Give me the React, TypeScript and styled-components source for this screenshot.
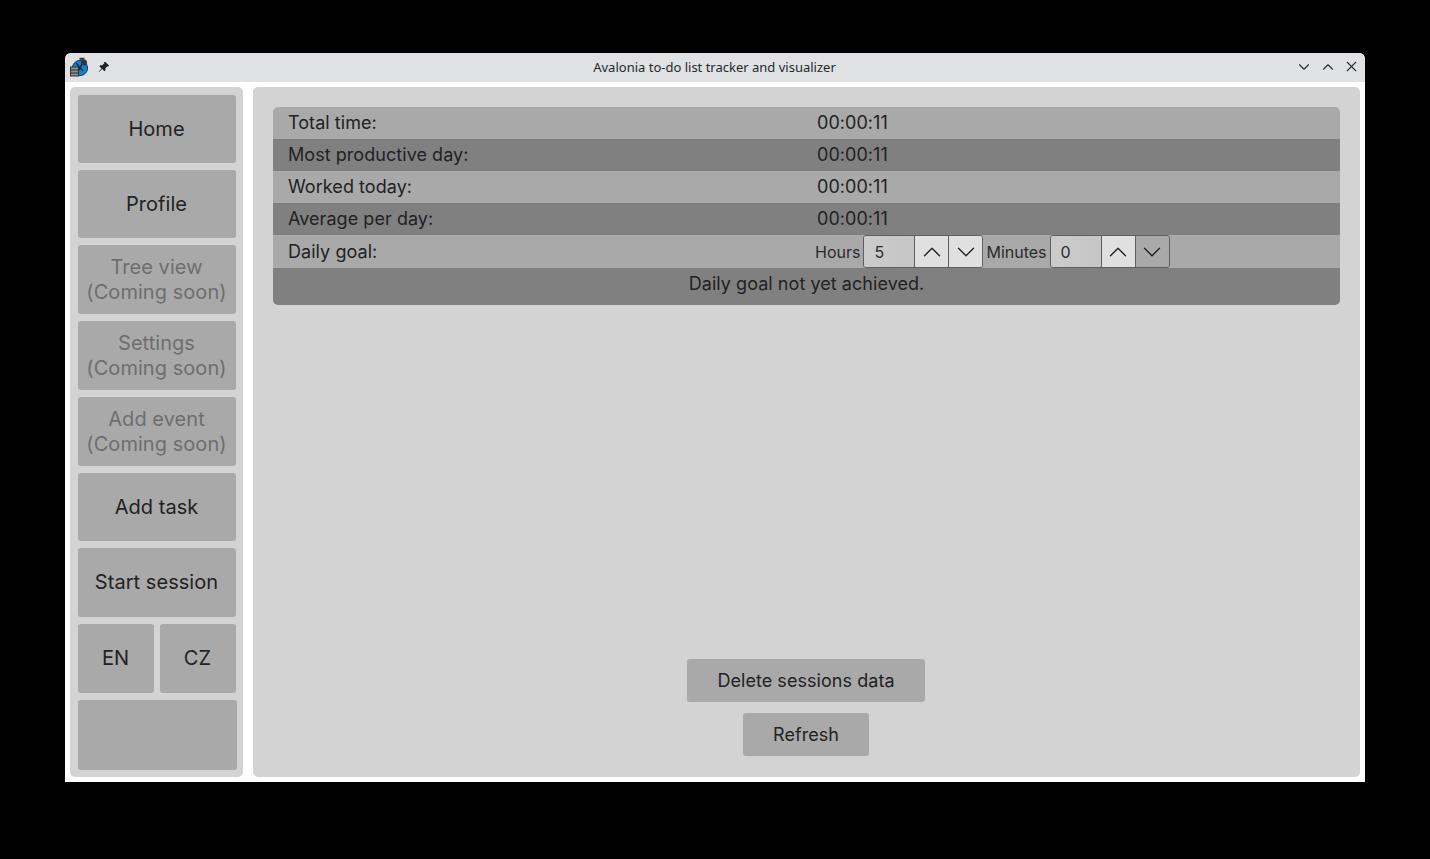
import styled, { createGlobalStyle } from 'styled-components';
import { ChevronDown, ChevronUp, X } from 'lucide-react';

const rows = [
  { label: 'Total time:', value: '00:00:11' },
  { label: 'Most productive day:', value: '00:00:11' },
  { label: 'Worked today:', value: '00:00:11' },
  { label: 'Average per day:', value: '00:00:11' },
];

function AppIcon() {
  return (
    <svg width="20" height="20" viewBox="0 0 20 20">
      <circle cx="11" cy="11" r="7.6" fill="#1583c9" stroke="#143a58" strokeWidth="1" />
      <path d="M7 6l7 8M13 7l-3 6" stroke="#0d2a44" strokeWidth="1.4" fill="none" />
      <rect x="10.5" y="0.8" width="5" height="2" fill="#2d3238" />
      <circle cx="15" cy="5.5" r="3" fill="#30363c" />
      <rect x="1.5" y="10" width="8" height="9" fill="#8d9189" stroke="#2c3238" strokeWidth="1" />
      <path d="M2 13h7M2 16h7" stroke="#2c3238" strokeWidth="1" />
    </svg>
  );
}

function PinIcon() {
  return (
    <svg width="12" height="12" viewBox="0 0 12 12">
      <path d="M7.2 0.8l4 4-1 .8-.8-.3-2 2 .1 2-1 1-2.3-2.3L1 11l-.3-.3 2.9-3.2L1.3 5.2l1-1 2 .1 2-2-.3-.8z" fill="#1f2225" />
    </svg>
  );
}

function Spinner({ label, value, hovered }: { label: string; value: string; hovered?: boolean }) {
  return (
    <SpinnerGroup>
      <SpinnerLabel>{label}</SpinnerLabel>
      <SpinnerBox>
        <SpinnerValue>{value}</SpinnerValue>
        <SpinnerButton>
          <ChevronUp size={30} strokeWidth={1.1} />
        </SpinnerButton>
        <SpinnerButton $hovered={hovered}>
          <ChevronDown size={30} strokeWidth={1.1} />
        </SpinnerButton>
      </SpinnerBox>
    </SpinnerGroup>
  );
}

function App() {
  return (
    <>
      <GlobalStyle />
      <Window>
        <TitleBar>
          <TitleLeft>
            <AppIcon />
            <PinIcon />
          </TitleLeft>
          <Title>Avalonia to-do list tracker and visualizer</Title>
          <TitleRight>
            <ChevronDown size={18} strokeWidth={1.5} />
            <ChevronUp size={18} strokeWidth={1.5} />
            <X size={17} strokeWidth={1.5} />
          </TitleRight>
        </TitleBar>
        <Body>
          <Sidebar>
            <NavButton>Home</NavButton>
            <NavButton>Profile</NavButton>
            <NavButton $disabled>
              Tree view
              <br />
              (Coming soon)
            </NavButton>
            <NavButton $disabled>
              Settings
              <br />
              (Coming soon)
            </NavButton>
            <NavButton $disabled>
              Add event
              <br />
              (Coming soon)
            </NavButton>
            <NavButton>Add task</NavButton>
            <NavButton>Start session</NavButton>
            <LangRow>
              <NavButton>EN</NavButton>
              <NavButton>CZ</NavButton>
            </LangRow>
            <BlankButton />
          </Sidebar>
          <Main>
            <StatsTable>
              {rows.map((row, i) => (
                <StatRow key={row.label} $dark={i % 2 === 1}>
                  <StatLabel>{row.label}</StatLabel>
                  <StatValue>{row.value}</StatValue>
                </StatRow>
              ))}
              <GoalRow>
                <StatLabel>Daily goal:</StatLabel>
                <GoalInputs>
                  <Spinner label="Hours" value="5" />
                  <Spinner label="Minutes" value="0" hovered />
                </GoalInputs>
              </GoalRow>
              <GoalMessage>Daily goal not yet achieved.</GoalMessage>
            </StatsTable>
            <Actions>
              <ActionButton>Delete sessions data</ActionButton>
              <ActionButton>Refresh</ActionButton>
            </Actions>
          </Main>
        </Body>
      </Window>
    </>
  );
}

const GlobalStyle = createGlobalStyle`
  html, body {
    margin: 0;
    height: 100%;
    background: #000;
  }
  body {
    font-family: Inter, "Liberation Sans", sans-serif;
    color: #222;
    letter-spacing: 0.05px;
    overflow: hidden;
  }
`;

const Window = styled.div`
  width: 1300px;
  height: 729px;
  margin: 53px 0 0 65px;
  display: flex;
  flex-direction: column;
  background: #fff;
  border-radius: 6px 6px 0 0;
  overflow: hidden;
`;

const TitleBar = styled.header`
  height: 29px;
  flex: none;
  background: #dfe1e3;
  display: grid;
  grid-template-columns: 1fr auto 1fr;
  align-items: center;
  padding: 0 5px 2px 4px;
  box-sizing: border-box;
`;

const TitleLeft = styled.div`
  display: flex;
  align-items: center;
  gap: 9px;
  margin-top: 1px;
`;

const Title = styled.div`
  font-family: 'Noto Sans', sans-serif;
  font-size: 13px;
  letter-spacing: 0;
  color: #26292c;
`;

const TitleRight = styled.div`
  justify-self: end;
  display: flex;
  align-items: center;
  gap: 6px;
  color: #2a2d30;
`;

const Body = styled.div`
  flex: 1;
  display: flex;
  gap: 10px;
  padding: 5px;
  min-height: 0;
`;

const Sidebar = styled.nav`
  width: 157px;
  flex: none;
  background: #d3d3d3;
  border-radius: 5px;
  padding: 8px;
  display: grid;
  grid-template-rows: 69px 69px 70px 70px 70px 69px 70px 70px 70px;
  row-gap: 6px;
`;

const NavButton = styled.div<{ $disabled?: boolean }>`
  background: #a9a9a9;
  border-radius: 3px;
  margin: 0 0 1px;
  padding-right: 1px;
  display: flex;
  align-items: center;
  justify-content: center;
  text-align: center;
  font-size: 20px;
  line-height: 25px;
  color: ${(p) => (p.$disabled ? '#6e6e6e' : '#222')};
`;

const LangRow = styled.div`
  display: grid;
  grid-template-columns: 76px 76px;
  column-gap: 6px;
`;

const BlankButton = styled.div`
  background: #a9a9a9;
  border-radius: 3px;
  margin-right: -1px;
`;

const Main = styled.main`
  flex: 1;
  background: #d3d3d3;
  border-radius: 5px;
  padding: 20px 20px 21px;
  display: flex;
  flex-direction: column;
  justify-content: space-between;
`;

const StatsTable = styled.section`
  border-radius: 5px;
  overflow: hidden;
  font-size: 18px;
`;

const StatRow = styled.div<{ $dark?: boolean }>`
  height: 32px;
  box-sizing: border-box;
  padding-bottom: 2px;
  display: grid;
  grid-template-columns: 1fr 1fr;
  align-items: center;
  background: ${(p) => (p.$dark ? '#808080' : '#a9a9a9')};
`;

const StatLabel = styled.div`
  padding-left: 15px;
`;

const StatValue = styled.div`
  padding-left: 10.5px;
`;

const GoalRow = styled.div`
  height: 33px;
  display: grid;
  grid-template-columns: 1fr 1fr;
  align-items: center;
  background: #a9a9a9;
`;

const GoalInputs = styled.div`
  display: flex;
  align-items: center;
  gap: 3px;
  padding-left: 8.5px;
`;

const SpinnerGroup = styled.div`
  display: flex;
  align-items: center;
  gap: 3px;
`;

const SpinnerLabel = styled.span`
  font-size: 16px;
  letter-spacing: 0;
  color: #2b2b2b;
`;

const SpinnerBox = styled.div`
  width: 120px;
  height: 33px;
  box-sizing: border-box;
  display: grid;
  grid-template-columns: 1fr 34px 34px;
  border: 1px solid #5f5f5f;
  border-radius: 3px;
  overflow: hidden;
`;

const SpinnerValue = styled.div`
  background: linear-gradient(90deg, #cbcbcb, #c6c6c6);
  font-size: 16px;
  color: #2b2b2b;
  padding-left: 10px;
  display: flex;
  align-items: center;
`;

const SpinnerButton = styled.div<{ $hovered?: boolean }>`
  background: ${(p) => (p.$hovered ? '#a9a9a9' : '#e0e0e0')};
  border-left: 1px solid #5f5f5f;
  color: #222;
  display: flex;
  align-items: center;
  justify-content: center;
`;

const GoalMessage = styled.div`
  height: 37px;
  background: #808080;
  display: flex;
  align-items: center;
  justify-content: center;
  padding-bottom: 7px;
  box-sizing: border-box;
`;

const Actions = styled.div`
  display: flex;
  flex-direction: column;
  align-items: center;
  gap: 11px;
  margin-right: 1px;
`;

const ActionButton = styled.div`
  height: 43px;
  padding: 0 30.5px;
  box-sizing: border-box;
  background: #a9a9a9;
  border-radius: 3px;
  font-size: 18px;
  display: flex;
  align-items: center;
`;

export default App;
